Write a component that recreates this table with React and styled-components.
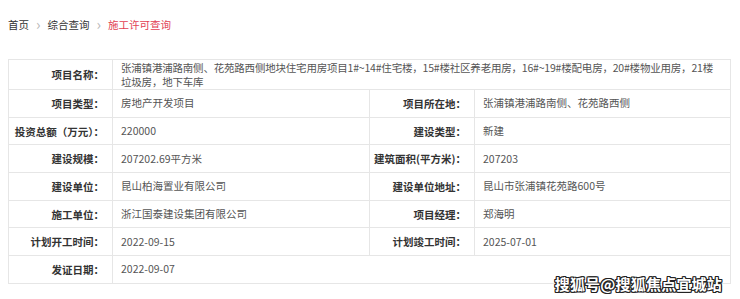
import React from "react";
import styled, { createGlobalStyle } from "styled-components";

const rows = [
  [["项目类型：", "房地产开发项目"], ["项目所在地：", "张浦镇港浦路南侧、花苑路西侧"]],
  [["投资总额（万元）：", "220000"], ["建设类型：", "新建"]],
  [["建设规模：", "207202.69平方米"], ["建筑面积(平方米)：", "207203"]],
  [["建设单位：", "昆山柏海置业有限公司"], ["建设单位地址：", "昆山市张浦镇花苑路600号"]],
  [["施工单位：", "浙江国泰建设集团有限公司"], ["项目经理：", "郑海明"]],
  [["计划开工时间：", "2022-09-15"], ["计划竣工时间：", "2025-07-01"]],
];

export default function App() {
  return (
    <Page>
      <GlobalStyle />
      <Crumbs>
        <CrumbLink>首页</CrumbLink>
        <Arrow>›</Arrow>
        <CrumbLink>综合查询</CrumbLink>
        <Arrow>›</Arrow>
        <CrumbLink $active>施工许可查询</CrumbLink>
      </Crumbs>
      <TableWrap>
        <Table>
          <colgroup>
            <col style={{ width: 104 }} />
            <col style={{ width: 257 }} />
            <col style={{ width: 105 }} />
            <col style={{ width: 256 }} />
          </colgroup>
          <tbody>
            <Row $tall>
              <Label>项目名称：</Label>
              <Value colSpan={3} $wrap>
                张浦镇港浦路南侧、花苑路西侧地块住宅用房项目1#~14#住宅楼，15#楼社区养老用房，16#~19#楼配电房，20#楼物业用房，21楼
                <br />
                垃圾房，地下车库
              </Value>
            </Row>
            {rows.map((r, i) => (
              <Row key={i}>
                <Label>{r[0][0]}</Label>
                <Value>{r[0][1]}</Value>
                <Label>{r[1][0]}</Label>
                <Value>{r[1][1]}</Value>
              </Row>
            ))}
            <Row>
              <Label>发证日期：</Label>
              <Value colSpan={3}>2022-09-07</Value>
            </Row>
          </tbody>
        </Table>
        <Watermark>搜狐号@搜狐焦点宜城站</Watermark>
      </TableWrap>
    </Page>
  );
}

const GlobalStyle = createGlobalStyle`
  body {
    margin: 0;
    background: #fff;
    font-family: "Noto Sans CJK SC", "Noto Sans", sans-serif;
  }
`;

const Page = styled.div`
  width: 740px;
  height: 299px;
  padding: 0 10px 0 8px;
  box-sizing: border-box;
  overflow: hidden;
`;

const Crumbs = styled.div`
  display: flex;
  align-items: center;
  gap: 7px;
  height: 16px;
  padding-top: 16px;
  margin-bottom: 27px;
  font-size: 10.5px;
`;

const CrumbLink = styled.span`
  color: ${(p) => (p.$active ? "#e23f53" : "#333")};
`;

const Arrow = styled.span`
  color: #b8b8b8;
  font-size: 15px;
  line-height: 16px;
`;

const TableWrap = styled.div`
  position: relative;
`;

const Table = styled.table`
  width: 722px;
  border-collapse: collapse;
  table-layout: fixed;
  font-size: 10.5px;
`;

const Row = styled.tr`
  height: ${(p) => (p.$tall ? "30px" : "27.7px")};
`;

const Label = styled.td`
  border: 1px solid #e6e6e6;
  padding: 0 8px 0 2px;
  text-align: right;
  font-weight: bold;
  color: #333;
  white-space: nowrap;
  vertical-align: middle;
`;

const Value = styled.td`
  border: 1px solid #e6e6e6;
  padding: 0 8px;
  color: #555;
  vertical-align: middle;
  white-space: ${(p) => (p.$wrap ? "nowrap" : "normal")};
  letter-spacing: ${(p) => (p.$wrap ? "-0.2px" : "0")};
  line-height: ${(p) => (p.$wrap ? "14px" : "16px")};
`;

const Watermark = styled.div`
  position: absolute;
  right: 8px;
  bottom: -10px;
  font-size: 15px;
  font-weight: bold;
  letter-spacing: 0.2px;
  color: #fff;
  text-shadow: -1px -1px 0 #222, 1px -1px 0 #222, -1px 1px 0 #222, 1px 1px 0 #222,
    0 1px 0 #222, 0 -1px 0 #222, 1px 0 0 #222, -1px 0 0 #222;
`;
